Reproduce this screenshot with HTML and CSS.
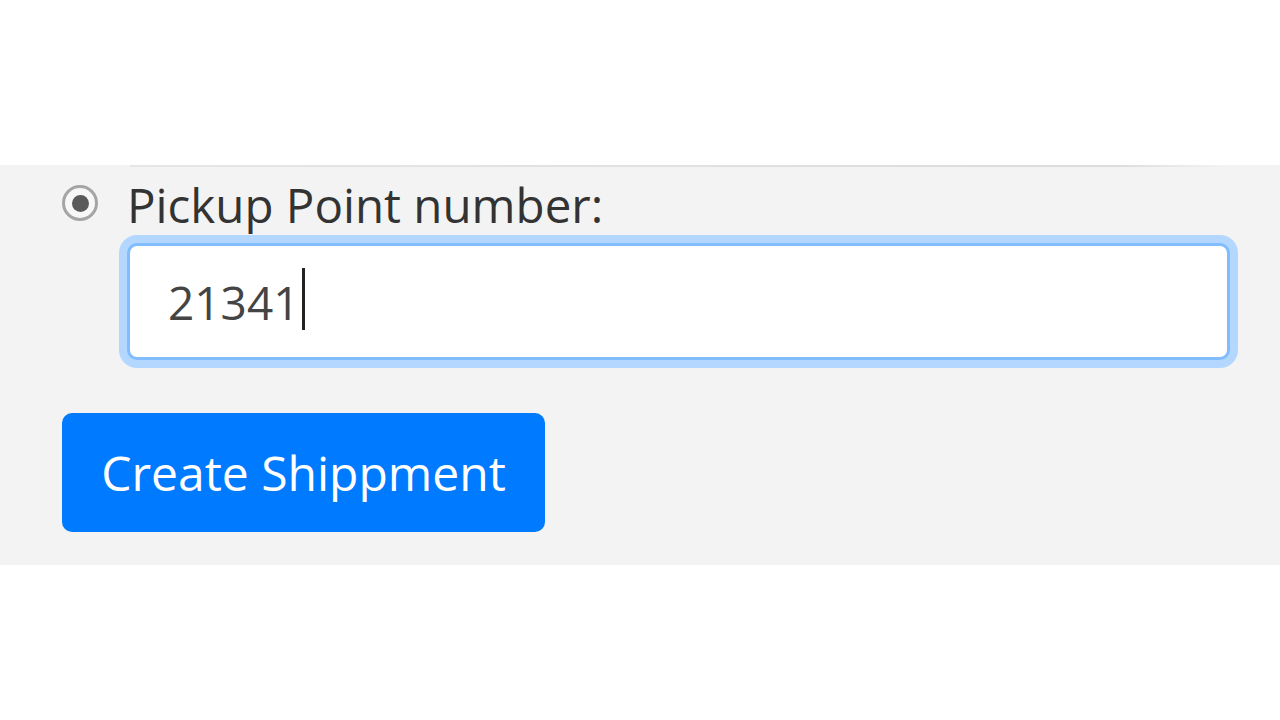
FILE: index.html
```html
<!DOCTYPE html>
<html lang="en">
<head>
    <meta charset="UTF-8">
    <meta name="viewport" content="width=device-width, initial-scale=1.0">
    <title>Create Shipment</title>
    <link rel="stylesheet" href="styles.css">
</head>
<body>
    <div class="top-space"></div>
    <main class="panel">
        <div class="edge-line"></div>
        <form class="ship-form">
            <div class="form-check">
                <span class="radio"><span class="radio-dot"></span></span>
                <label for="pickup">Pickup Point number:</label>
            </div>
            <div class="input-wrap">
                <input type="text" id="pickup" class="form-control" value="21341"><span class="caret"></span>
            </div>
            <button type="button" class="btn-primary">Create Shippment</button>
        </form>
    </main>
</body>
</html>
```

FILE: styles.css
```css
body {
    margin: 0;
    background-color: #fff;
    font-family: "Open Sans", "Noto Sans", Arial, sans-serif;
    color: #333;
}
.top-space {
    height: 165px;
}
.panel {
    background-color: #f3f3f3;
    height: 400px;
    padding: 0 50px 0 62px;
    box-sizing: border-box;
}
.edge-line {
    height: 2px;
    margin: 0 5px 0 68px;
    background: linear-gradient(to right, #e6e6e6, #dcdcdc 90%, #f3f3f3);
}
.ship-form {
    display: flex;
    flex-direction: column;
}
.form-check {
    display: flex;
    align-items: center;
    gap: 29px;
    height: 70px;
    margin-top: 2px;
}
.radio {
    width: 36px;
    height: 36px;
    border-radius: 50%;
    border: 3px solid #a5a5a5;
    box-sizing: border-box;
    display: flex;
    align-items: center;
    justify-content: center;
    margin-top: -2px;
    background-color: #f7f7f7;
}
.radio-dot {
    width: 17px;
    height: 17px;
    border-radius: 50%;
    background-color: #5a5a5a;
}
label {
    font-size: 47.5px;
    color: #333;
}
.input-wrap {
    position: relative;
    margin-left: 65px;
    margin-top: 4px;
}
.form-control {
    display: block;
    width: 100%;
    height: 117px;
    box-sizing: border-box;
    padding: 0 38px;
    font-family: inherit;
    font-size: 46px;
    color: #444;
    background-color: #fff;
    border: 3px solid #80bdff;
    border-radius: 10px;
    box-shadow: 0 0 0 8px #b3d7ff;
    outline: none;
}
.caret {
    position: absolute;
    left: 175px;
    top: 25px;
    width: 3px;
    height: 62px;
    background-color: #222;
}
.btn-primary {
    align-self: flex-start;
    margin-top: 53px;
    width: 483px;
    height: 119px;
    border: none;
    border-radius: 10px;
    background-color: #007bff;
    color: #fff;
    font-family: inherit;
    font-size: 48px;
}
```
